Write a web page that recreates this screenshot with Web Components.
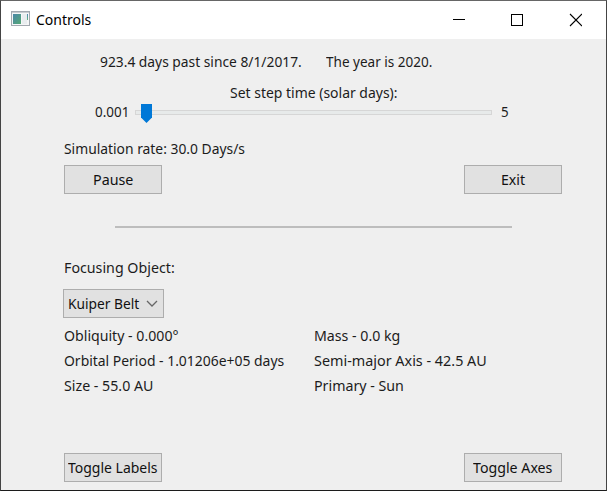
<!DOCTYPE html>
<html lang="en">
<head>
<meta charset="utf-8">
<title>Controls</title>
<style>
html,body{margin:0;height:100%;overflow:hidden}
body{font:15px/20px "Noto Sans","Open Sans",sans-serif;color:#1c1c1c}
</style>
</head>
<body>
<control-window></control-window>
<script>
class FitText extends HTMLElement {
  connectedCallback() {
    const root = this.attachShadow({mode: 'open'});
    root.innerHTML = `<style>
      :host{display:block;flex:none;height:20px;white-space:nowrap}
      span{display:inline-block;transform-origin:0 0}
    </style><span><slot></slot></span>`;
    const width = +this.getAttribute('w');
    this.style.width = width + 'px';
    const span = root.querySelector('span');
    span.style.transform = `scaleX(${width / span.offsetWidth})`;
  }
}
class PushButton extends HTMLElement {
  connectedCallback() {
    this.attachShadow({mode: 'open'}).innerHTML = `<style>
      :host{display:flex;box-sizing:border-box;width:98px;height:29px;border:1px solid #adadad;background:#e1e1e1;justify-content:center;padding-top:3px;color:#111}
    </style><fit-text w="${this.getAttribute('w')}">${this.getAttribute('label')}</fit-text>`;
  }
}
class DropDown extends HTMLElement {
  connectedCallback() {
    this.attachShadow({mode: 'open'}).innerHTML = `<style>
      :host{display:flex;box-sizing:border-box;width:101px;height:29px;border:1px solid #adadad;background:#e1e1e1;padding:3px 5px 0 4px;justify-content:space-between;color:#111}
      svg{display:block;margin-top:7px}
    </style><fit-text w="71.5">${this.getAttribute('value')}</fit-text>
    <svg width="12" height="8" viewBox="0 0 12 8"><path d="M1 1l5 5 5-5" fill="none" stroke="#666" stroke-width="1.3"/></svg>`;
  }
}
class StepSlider extends HTMLElement {
  connectedCallback() {
    this.attachShadow({mode: 'open'}).innerHTML = `<style>
      :host{display:block;width:358px;height:22px}svg{display:block}
    </style><svg width="358" height="22">
      <rect x=".5" y="9.5" width="356" height="4" fill="#e7eaea" stroke="#d6d6d6"/>
      <path d="M6 3h11v13.5L11.5 22 6 16.5z" fill="#0078d7"/></svg>`;
  }
}
class TitleBar extends HTMLElement {
  connectedCallback() {
    this.attachShadow({mode: 'open'}).innerHTML = `<style>
      :host{display:flex;height:38px;background:#fff;color:#000;flex:none}
      .icon{margin:10px 0 0 10px}
      fit-text{margin:8px auto 0 6px}
      .buttons{margin:12px 24px 0 0}
      svg{display:block;flex:none}
    </style>
    <svg class="icon" width="19" height="16">
      <defs><linearGradient id="g" x2="1" y2="1"><stop stop-color="#4b87a8"/><stop offset="1" stop-color="#55a874"/></linearGradient>
      <linearGradient id="h" x2="0" y2="1"><stop stop-color="#4f86b8"/><stop offset="1" stop-color="#67b57c"/></linearGradient></defs>
      <rect x=".5" y=".5" width="18" height="14" fill="#f5f6f7" stroke="#a3a9b0"/>
      <path d="M1 1.5h17" stroke="#c8ccd0"/>
      <rect x="2" y="3" width="8" height="10" fill="url(#g)"/>
      <rect x="11" y="3" width="5" height="10" fill="#e9edef"/>
      <rect x="16" y="3" width="1" height="6" fill="url(#h)"/>
    </svg>
    <fit-text w="55">Controls</fit-text>
    <svg class="buttons" width="129" height="14" fill="none" stroke="#000">
      <path d="M0 6.5h12" shape-rendering="crispEdges"/>
      <rect x="58.5" y="1.5" width="11" height="11" shape-rendering="crispEdges"/>
      <path d="M117 1l12 12M129 1l-12 12" stroke-width="1.1"/>
    </svg>`;
  }
}
class ControlWindow extends HTMLElement {
  connectedCallback() {
    this.attachShadow({mode: 'open'}).innerHTML = `<style>
      :host{display:flex;flex-direction:column;box-sizing:border-box;width:607px;height:491px;background:#efefef;border:1px solid #1c1c1c;border-color:#666 #444 #1c1c1c #444}
      .row{display:flex;flex:none}
      .status{height:20px;margin:12px 0 0 98.5px;gap:24.5px}
      .caption{margin:11px 0 0 229px}
      .slide{margin:-1px 0 0 93.5px;height:22px}
      .slide step-slider{margin:0 8px 0 6.5px}
      .rate{margin:15px 0 0 62.5px}
      .pair{justify-content:space-between;width:498px;margin-left:63px}
      .first{margin-top:7px}
      .rule{height:2px;width:397px;background:#bdbdbd;margin:32px 0 0 114px;flex:none}
      .focus{margin:29px 0 0 62.5px}
      drop-down{margin:12px 0 0 62px;flex:none}
      .facts{display:grid;grid-template-columns:250px 1fr;grid-auto-rows:25px;margin:7px 0 0 62.5px}
      .last{margin-top:53px}
    </style>
    <title-bar></title-bar>
    <div class="row status"><fit-text w="201.5">923.4 days past since 8/1/2017.</fit-text><fit-text w="106.5">The year is 2020.</fit-text></div>
    <fit-text class="caption" w="167.5">Set step time (solar days):</fit-text>
    <div class="row slide"><fit-text w="34">0.001</fit-text><step-slider></step-slider><fit-text w="8">5</fit-text></div>
    <fit-text class="rate" w="181">Simulation rate: 30.0 Days/s</fit-text>
    <div class="row pair first"><push-button label="Pause" w="40"></push-button><push-button label="Exit" w="24.5"></push-button></div>
    <div class="rule"></div>
    <fit-text class="focus" w="111">Focusing Object:</fit-text>
    <drop-down value="Kuiper Belt"></drop-down>
    <div class="facts">
      <fit-text w="115">Obliquity - 0.000°</fit-text><fit-text w="86">Mass - 0.0 kg</fit-text>
      <fit-text w="220">Orbital Period - 1.01206e+05 days</fit-text><fit-text w="172.5">Semi-major Axis - 42.5 AU</fit-text>
      <fit-text w="89">Size - 55.0 AU</fit-text><fit-text w="90">Primary - Sun</fit-text>
    </div>
    <div class="row pair last"><push-button label="Toggle Labels" w="89.5"></push-button><push-button label="Toggle Axes" w="79.5"></push-button></div>`;
  }
}
customElements.define('fit-text', FitText);
customElements.define('push-button', PushButton);
customElements.define('drop-down', DropDown);
customElements.define('step-slider', StepSlider);
customElements.define('title-bar', TitleBar);
customElements.define('control-window', ControlWindow);
</script>
</body>
</html>
